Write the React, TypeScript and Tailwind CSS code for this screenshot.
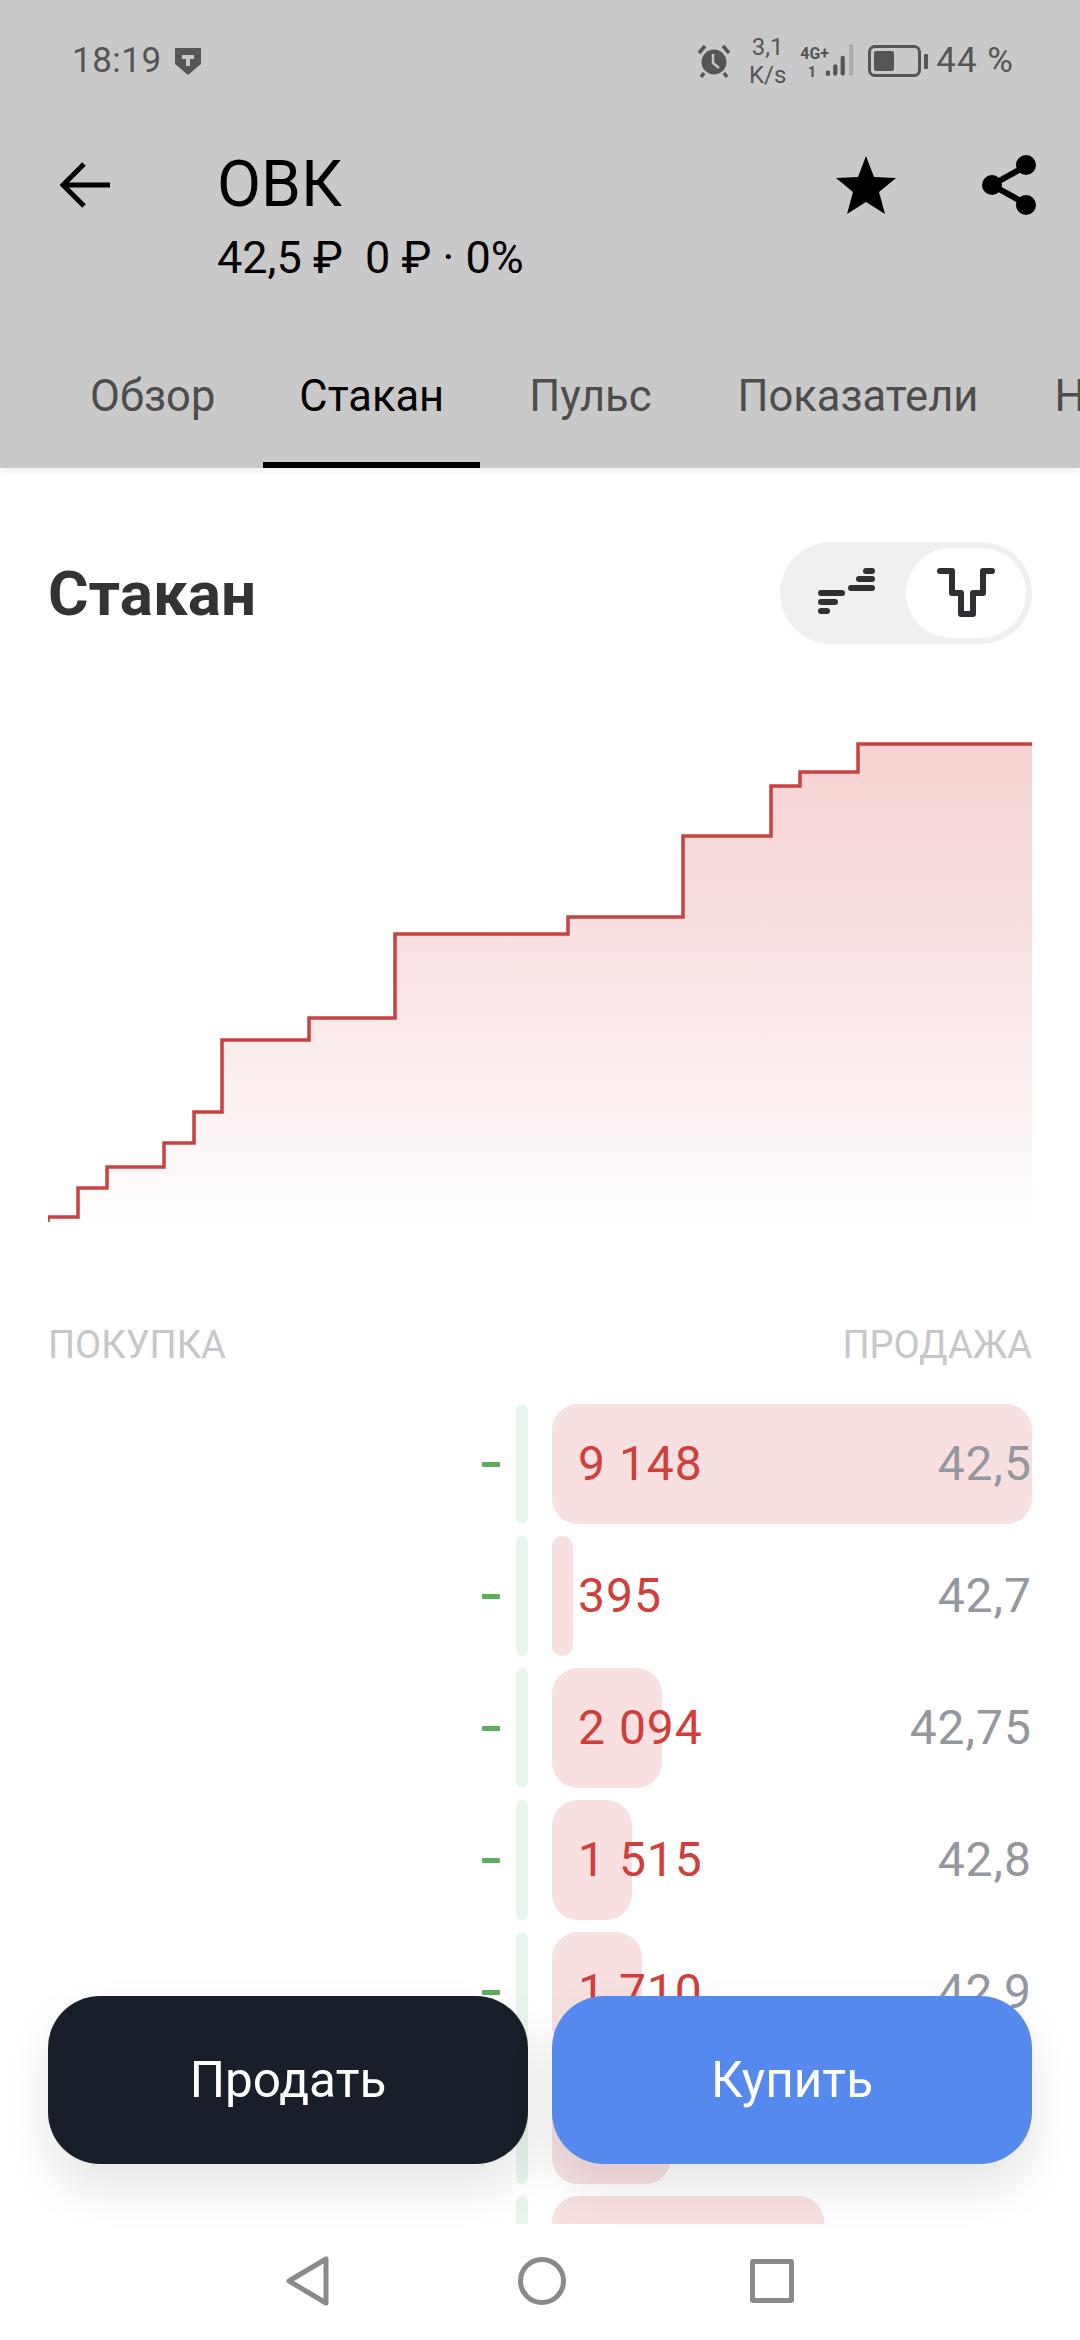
const rows = [
  { qty: "9 148", price: "42,5", bar: 480 },
  { qty: "395", price: "42,7", bar: 21 },
  { qty: "2 094", price: "42,75", bar: 110 },
  { qty: "1 515", price: "42,8", bar: 80 },
  { qty: "1 710", price: "42,9", bar: 90 },
  // these two are only seen as bars, the rest is behind the buttons
  { qty: "", price: "", bar: 119 },
  { qty: "", price: "", bar: 272 },
];

const tabs = ["Обзор", "Стакан", "Пульс", "Показатели", "Новости"];

const steps =
  "M0 482V477H30V448H59V427H116V403H146V372H174V300H261V278H347V194H520V177H635V96H723V46H752V32H810V4H984";

function StatusBar() {
  return (
    <div className="flex h-[120px] items-center justify-between pl-[72px] pr-[66px] pt-[2px] text-[#555]">
      <div className="flex items-center gap-[12px]">
        <span className="text-[35px] tracking-[0.5px]">18:19</span>
        <svg width="28" height="28" viewBox="0 0 28 28">
          <path d="M1 1H27V17L14 28L1 17Z" fill="#555" />
          <path d="M8 8H20V12H16V19H12V12H8Z" fill="#c9c9c9" />
        </svg>
      </div>
      <div className="flex items-center">
        <svg width="34" height="34" viewBox="0 0 34 34" className="mr-[18px]">
          <circle cx="17" cy="18" r="12.5" fill="#555" />
          <path d="M16 10V19L22 24" stroke="#c9c9c9" strokeWidth="2.5" fill="none" />
          <path d="M2 9L8 2M32 9L26 2M7 29L4 33M27 29L30 33" stroke="#555" strokeWidth="3.5" fill="none" />
        </svg>
        <div className="mr-[13px] flex flex-col items-center text-[24px] leading-[28px]">
          <span>3,1</span>
          <span>K/s</span>
        </div>
        <svg width="62" height="36" viewBox="0 0 56 34" className="mr-[7px]">
          <text x="0" y="15" fontSize="15" fontWeight="700" fill="#555" fontFamily="Roboto, sans-serif">4G+</text>
          <text x="7" y="32" fontSize="14" fontWeight="700" fill="#555" fontFamily="Roboto, sans-serif">1</text>
          <rect x="24" y="26" width="4" height="5" rx="1.5" fill="#555" />
          <rect x="31" y="20" width="4" height="11" rx="2" fill="#555" />
          <rect x="38" y="12" width="4" height="19" rx="2" fill="#555" />
          <rect x="46" y="1" width="4" height="30" rx="2" fill="#aaa" />
        </svg>
        <div className="mr-[3px] flex h-[32px] w-[53px] items-center rounded-[7px] border-[3px] border-[#555] p-[3px]">
          <div className="h-full w-[20px] rounded-[2px] bg-[#555]" />
        </div>
        <div className="mr-[8px] h-[15px] w-[4px] rounded-[1px] bg-[#555]" />
        <span className="text-[35px] tracking-[1px]">44 %</span>
      </div>
    </div>
  );
}

function TopBar() {
  return (
    <div className="flex items-start pl-[60px] pr-[43px] text-black">
      <svg width="50" height="46" viewBox="0 0 50 46" className="mt-[42px] shrink-0">
        <path d="M24 2L3 23L24 44M3 23H50" stroke="black" strokeWidth="5" fill="none" />
      </svg>
      <div className="ml-[107px] flex-1">
        <div className="mt-[21px] text-[64px] leading-[88px]">ОВК</div>
        <div className="mt-[4px] text-[45px] leading-[50px]">42,5 ₽&nbsp;&nbsp;0 ₽ · 0%</div>
      </div>
      <svg width="60" height="58" viewBox="0 0 60 58" className="mt-[36px] mr-[85px] shrink-0">
        <path d="M30 0L38 21L60 22L43 36L49 58L30 46L11 58L17 36L0 22L22 21Z" fill="black" />
      </svg>
      <svg width="56" height="62" viewBox="0 0 56 62" className="mt-[34px] shrink-0">
        <path d="M45 12L11 31L45 50" stroke="black" strokeWidth="6" fill="none" />
        <circle cx="45" cy="11" r="10" fill="black" />
        <circle cx="11" cy="31" r="10" fill="black" />
        <circle cx="45" cy="51" r="10" fill="black" />
      </svg>
    </div>
  );
}

function Tabs() {
  return (
    <div className="mt-auto flex h-[96px] items-stretch overflow-hidden pl-[48px]">
      {tabs.map((t) => (
        <div
          key={t}
          className={
            t === "Стакан"
              ? "mr-[6px] shrink-0 border-b-[6px] border-black px-[36px] text-[43.5px] leading-[50px] text-black"
              : "shrink-0 border-b-[6px] border-transparent px-[43px] first:pl-[42px] first:pr-[48px] last:pl-[33px] text-[43.5px] leading-[50px] text-[#4d4d4d]"
          }
        >
          {t}
        </div>
      ))}
    </div>
  );
}

function Toggle() {
  return (
    <div className="flex h-[102px] w-[252px] items-center rounded-full bg-[#eff0f2] pl-[38px] pr-[6px]">
      <svg width="60" height="50" viewBox="0 0 60 50" className="shrink-0">
        <g stroke="#2f3033" strokeWidth="6" strokeLinecap="round">
          <path d="M3 25H24M3 34H17M3 43H9M33 20H54M41 11H54M48 3H54" />
        </g>
      </svg>
      <div className="ml-auto flex h-[90px] w-[120px] items-center justify-center rounded-full bg-white">
        <svg width="58" height="52" viewBox="0 0 58 52">
          <path
            d="M3 4H15V26H24V47H36V26H46V4H55"
            stroke="#2f3033"
            strokeWidth="6"
            strokeLinecap="round"
            strokeLinejoin="round"
            fill="none"
          />
        </svg>
      </div>
    </div>
  );
}

function Chart() {
  return (
    <svg width="984" height="490" viewBox="0 0 984 490" className="mt-[96px] block shrink-0">
      <defs>
        <linearGradient id="depth" x1="0" y1="0" x2="0" y2="1">
          <stop offset="0" stopColor="#d9484a" stopOpacity="0.25" />
          <stop offset="0.5" stopColor="#d9484a" stopOpacity="0.14" />
          <stop offset="1" stopColor="#d9484a" stopOpacity="0" />
        </linearGradient>
      </defs>
      <path d={steps + "V490H0Z"} fill="url(#depth)" />
      <path d={steps} stroke="#c8423f" strokeWidth="3.5" fill="none" />
    </svg>
  );
}

function Row({ qty, price, bar }: { qty: string; price: string; bar: number }) {
  return (
    <div className="flex h-[120px] shrink-0 items-center">
      <div className="flex flex-1 justify-end">
        <div className="h-[5px] w-[18px] rounded-[1px] bg-[#5dae5c]" />
      </div>
      <div className="ml-[16px] h-full w-[12px] rounded-full bg-[#e7f5ec]" />
      <div className="relative ml-[24px] flex h-full w-[480px] items-center justify-between pl-[26px]">
        <div className="absolute top-0 bottom-0 left-0 rounded-[26px] bg-[#f8e0e1]" style={{ width: bar }} />
        <span className="relative text-[48px] tracking-[1px] text-[#d03f3a]">{qty}</span>
        <span className="relative text-[48px] tracking-[1px] text-[#95979f]">{price}</span>
      </div>
    </div>
  );
}

function ActionButton({ label, color }: { label: string; color: string }) {
  return (
    <div
      className={
        "flex h-[168px] flex-1 items-center justify-center rounded-[52px] text-[49.5px] text-white shadow-[0_24px_48px_rgba(0,0,0,0.1)] " +
        color
      }
    >
      {label}
    </div>
  );
}

export default function App() {
  return (
    <div className="relative flex h-[2340px] w-[1080px] flex-col overflow-hidden bg-white font-['Roboto',sans-serif]">
      <div className="flex h-[468px] shrink-0 flex-col bg-[#c9c9c9] shadow-[0_2px_8px_rgba(0,0,0,0.08)]">
        <StatusBar />
        <TopBar />
        <Tabs />
      </div>

      <div className="flex h-[1756px] shrink-0 flex-col overflow-hidden px-[48px]">
        <div className="mt-[74px] flex h-[102px] shrink-0 items-center justify-between">
          <h1 className="text-[62px] font-bold text-[#333]">Стакан</h1>
          <Toggle />
        </div>
        <Chart />
        <div className="mt-[95px] flex shrink-0 justify-between text-[38px] leading-[40px] text-[#c5c7cb]">
          <span>ПОКУПКА</span>
          <span>ПРОДАЖА</span>
        </div>
        <div className="mt-[39px] flex shrink-0 flex-col gap-[12px]">
          {rows.map((r) => (
            <Row key={r.bar} {...r} />
          ))}
        </div>
      </div>

      <div className="absolute top-[1996px] right-[48px] left-[48px] flex gap-[24px]">
        <ActionButton label="Продать" color="bg-[#181f2b]" />
        <ActionButton label="Купить" color="bg-[#5589ee]" />
      </div>

      <div className="flex flex-1 items-center justify-center pb-[2px]">
        <svg width="44" height="50" viewBox="0 0 44 50" className="mr-[188px]">
          <path d="M40 3V47L3 25Z" stroke="#8a8a8a" strokeWidth="5" strokeLinejoin="round" fill="none" />
        </svg>
        <div className="mr-[184px] h-[48px] w-[48px] rounded-full border-[5px] border-[#8a8a8a]" />
        <div className="h-[44px] w-[44px] rounded-[3px] border-[5px] border-[#8a8a8a]" />
      </div>
    </div>
  );
}
